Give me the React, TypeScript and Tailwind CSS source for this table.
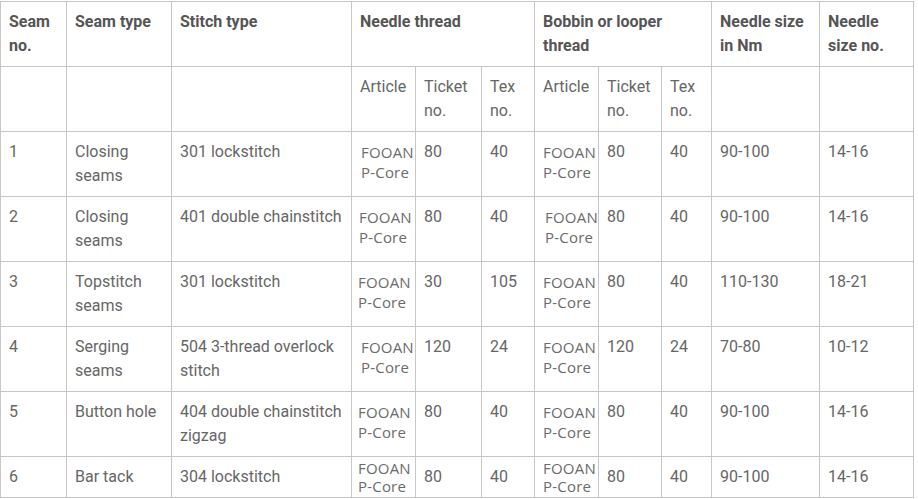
const cols = [66, 105, 180, 64, 66, 53, 64, 63, 50, 108, 94];

type Row = {
  no: string;
  seam: string;
  stitch: string;
  nTicket: string;
  nTex: string;
  bTicket: string;
  bTex: string;
  nm: string;
  size: string;
  nPad: string;
  bPad: string;
};

const rows: Row[] = [
  { no: "1", seam: "Closing seams", stitch: "301 lockstitch", nTicket: "80", nTex: "40", bTicket: "80", bTex: "40", nm: "90-100", size: "14-16", nPad: "pl-[9px]", bPad: "pl-[8px]" },
  { no: "2", seam: "Closing seams", stitch: "401 double chainstitch", nTicket: "80", nTex: "40", bTicket: "80", bTex: "40", nm: "90-100", size: "14-16", nPad: "pl-[7px]", bPad: "pl-[10px]" },
  { no: "3", seam: "Topstitch seams", stitch: "301 lockstitch", nTicket: "30", nTex: "105", bTicket: "80", bTex: "40", nm: "110-130", size: "18-21", nPad: "pl-[6px]", bPad: "pl-[8px]" },
  { no: "4", seam: "Serging seams", stitch: "504 3-thread overlock stitch", nTicket: "120", nTex: "24", bTicket: "120", bTex: "24", nm: "70-80", size: "10-12", nPad: "pl-[9px]", bPad: "pl-[8px]" },
  { no: "5", seam: "Button hole", stitch: "404 double chainstitch zigzag", nTicket: "80", nTex: "40", bTicket: "80", bTex: "40", nm: "90-100", size: "14-16", nPad: "pl-[6px]", bPad: "pl-[8px]" },
  { no: "6", seam: "Bar tack", stitch: "304 lockstitch", nTicket: "80", nTex: "40", bTicket: "80", bTex: "40", nm: "90-100", size: "14-16", nPad: "pl-[6px]", bPad: "pl-[8px]" },
];

const td = "border border-[#c6c6c6] px-2 pt-2 pb-2 align-top";
const th = "border border-[#c6c6c6] px-2 pt-2 pb-2 align-top text-left font-bold text-[#555555]";

function Article({ pad, last }: { pad: string; last: boolean }) {
  return (
    <td
      className={`border border-[#c6c6c6] pr-0 align-top font-['Open_Sans',sans-serif] text-[15px] tracking-[0.2px] whitespace-nowrap text-[#6b6b6b] ${pad} ${
        last ? "pt-[2px] pb-0 leading-[18px]" : "pt-[10px] leading-[20px]"
      }`}
    >
      FOOAN
      <br />
      P-Core
    </td>
  );
}

export default function App() {
  return (
    <div className="h-[499px] w-[918px] overflow-hidden bg-white pt-px font-['Roboto',sans-serif] text-[16px] leading-6 text-[#666666]">
      <table className="w-[914px] table-fixed border-collapse">
        <colgroup>
          {cols.map((w, i) => (
            <col key={i} style={{ width: w }} />
          ))}
        </colgroup>
        <thead>
          <tr className="h-[65px]">
            <th className={th}>Seam no.</th>
            <th className={th}>Seam type</th>
            <th className={th}>Stitch type</th>
            <th className={th} colSpan={3}>
              Needle thread
            </th>
            <th className={th} colSpan={3}>
              Bobbin or looper thread
            </th>
            <th className={th}>Needle size in Nm</th>
            <th className={th}>Needle size no.</th>
          </tr>
          <tr className="h-[65px] font-normal">
            <td className={td}></td>
            <td className={td}></td>
            <td className={td}></td>
            <td className={td}>Article</td>
            <td className={td}>Ticket no.</td>
            <td className={td}>Tex no.</td>
            <td className={td}>Article</td>
            <td className={td}>Ticket no.</td>
            <td className={td}>Tex no.</td>
            <td className={td}></td>
            <td className={td}></td>
          </tr>
        </thead>
        <tbody>
          {rows.map((r, i) => {
            const last = i === rows.length - 1;
            return (
              <tr key={r.no} className={last ? "h-[41px]" : "h-[65px]"}>
                <td className={td}>{r.no}</td>
                <td className={td}>{r.seam}</td>
                <td className={td}>{r.stitch}</td>
                <Article pad={r.nPad} last={last} />
                <td className={td}>{r.nTicket}</td>
                <td className={td}>{r.nTex}</td>
                <Article pad={r.bPad} last={last} />
                <td className={td}>{r.bTicket}</td>
                <td className={td}>{r.bTex}</td>
                <td className={td}>{r.nm}</td>
                <td className={td}>{r.size}</td>
              </tr>
            );
          })}
        </tbody>
      </table>
    </div>
  );
}
